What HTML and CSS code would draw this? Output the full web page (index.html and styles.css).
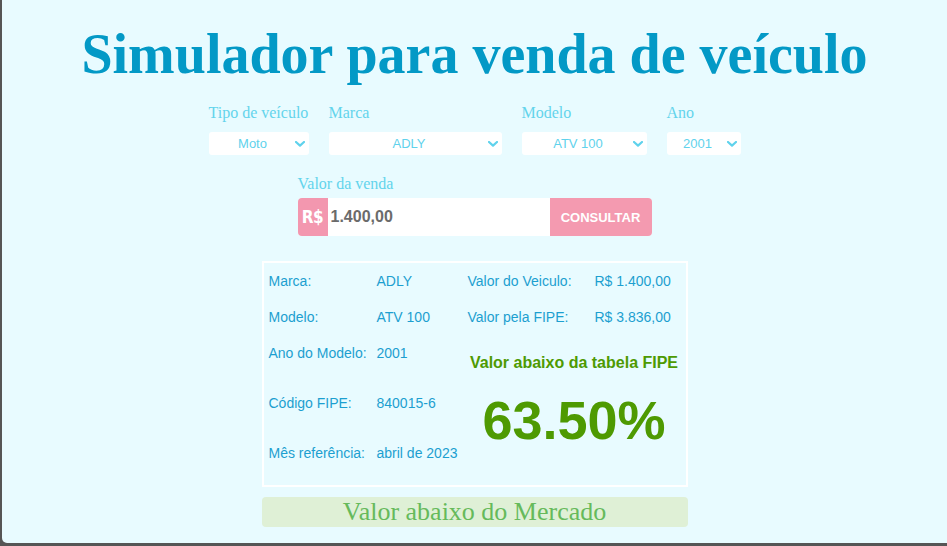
FILE: index.html
```html
<!DOCTYPE html>
<html lang="pt-BR">
<head>
<meta charset="utf-8">
<title>Simulador para venda de veículo</title>
<link rel="stylesheet" href="styles.css">
</head>
<body>
<main class="page">
  <h1 class="title">Simulador para venda de veículo</h1>

  <form class="filters">
    <div class="field field-tipo">
      <label class="field-label" for="tipo">Tipo de veículo</label>
      <div class="select-wrap">
        <select id="tipo" class="select"><option>Moto</option></select>
        <svg class="chevron" viewBox="0 0 10 6" aria-hidden="true"><path d="M1 1 L5 4.6 L9 1" fill="none" stroke="currentColor" stroke-width="2.2" stroke-linecap="round" stroke-linejoin="round"/></svg>
      </div>
    </div>
    <div class="field field-marca">
      <label class="field-label" for="marca">Marca</label>
      <div class="select-wrap">
        <select id="marca" class="select"><option>ADLY</option></select>
        <svg class="chevron" viewBox="0 0 10 6" aria-hidden="true"><path d="M1 1 L5 4.6 L9 1" fill="none" stroke="currentColor" stroke-width="2.2" stroke-linecap="round" stroke-linejoin="round"/></svg>
      </div>
    </div>
    <div class="field field-modelo">
      <label class="field-label" for="modelo">Modelo</label>
      <div class="select-wrap">
        <select id="modelo" class="select"><option>ATV 100</option></select>
        <svg class="chevron" viewBox="0 0 10 6" aria-hidden="true"><path d="M1 1 L5 4.6 L9 1" fill="none" stroke="currentColor" stroke-width="2.2" stroke-linecap="round" stroke-linejoin="round"/></svg>
      </div>
    </div>
    <div class="field field-ano">
      <label class="field-label" for="ano">Ano</label>
      <div class="select-wrap">
        <select id="ano" class="select"><option>2001</option></select>
        <svg class="chevron" viewBox="0 0 10 6" aria-hidden="true"><path d="M1 1 L5 4.6 L9 1" fill="none" stroke="currentColor" stroke-width="2.2" stroke-linecap="round" stroke-linejoin="round"/></svg>
      </div>
    </div>
  </form>

  <div class="sale">
    <label class="field-label" for="valor">Valor da venda</label>
    <div class="input-group">
      <span class="prefix">R$</span>
      <input id="valor" class="value-input" type="text" value="1.400,00">
      <button class="consult" type="button">CONSULTAR</button>
    </div>
  </div>

  <section class="result">
    <span class="k">Marca:</span><span class="v">ADLY</span>
    <span class="k">Valor do Veiculo:</span><span class="v">R$ 1.400,00</span>
    <span class="k">Modelo:</span><span class="v">ATV 100</span>
    <span class="k">Valor pela FIPE:</span><span class="v">R$ 3.836,00</span>
    <span class="k">Ano do Modelo:</span><span class="v">2001</span>
    <div class="fipe">
      <div class="fipe-title">Valor abaixo da tabela FIPE</div>
      <div class="fipe-pct">63.50%</div>
    </div>
    <span class="k">Código FIPE:</span><span class="v">840015-6</span>
    <span class="k">Mês referência:</span><span class="v">abril de 2023</span>
  </section>

  <div class="verdict">Valor abaixo do Mercado</div>
</main>
</body>
</html>
```

FILE: styles.css
```css
* { box-sizing: border-box; }

html, body {
  margin: 0;
  padding: 0;
  height: 100%;
}

body {
  background: #555555;
  overflow: hidden;
}

.page {
  margin-left: 2px;
  height: 543px;
  background: #e8fbff;
  border-bottom-left-radius: 5px;
  padding-top: 22px;
  display: flex;
  flex-direction: column;
  align-items: center;
}

.title {
  margin: 0;
  font-family: "Liberation Serif", "Times New Roman", serif;
  font-weight: bold;
  font-size: 56px;
  line-height: 64px;
  color: #0399c6;
  text-align: center;
}

.filters {
  margin: 18px 0 0;
  display: flex;
  gap: 20px;
}

.field { display: flex; flex-direction: column; }
.field-tipo { width: 100px; }
.field-marca { width: 173px; }
.field-modelo { width: 125px; }
.field-ano { width: 74px; }

.field-label {
  display: block;
  font-family: "Liberation Serif", "Times New Roman", serif;
  font-size: 16px;
  line-height: 18px;
  color: #63d4ec;
  margin-bottom: 10px;
  white-space: nowrap;
}

.select-wrap {
  position: relative;
  height: 23px;
  color: #5fd2ec;
}

.select {
  -webkit-appearance: none;
  appearance: none;
  width: 100%;
  height: 23px;
  border: none;
  border-radius: 3px;
  background: #ffffff;
  font-family: "Liberation Sans", Arial, sans-serif;
  font-size: 13px;
  color: #5fd2ec;
  padding: 0 12px 0 0;
  text-align: center;
  text-align-last: center;
  outline: none;
}

.chevron {
  position: absolute;
  right: 4px;
  top: 9px;
  width: 10px;
  height: 6px;
  pointer-events: none;
}

.sale {
  margin-top: 20px;
  width: 354px;
}

.sale .field-label { margin-bottom: 5px; }

.input-group {
  display: flex;
  height: 38px;
  border-radius: 4px;
  overflow: hidden;
  background: #ffffff;
}

.prefix {
  width: 30px;
  flex: none;
  background: #f397af;
  color: #ffffff;
  font-family: "Liberation Sans Narrow", "DejaVu Sans Condensed", "Liberation Sans", sans-serif;
  font-stretch: condensed;
  font-weight: 600;
  font-size: 17px;
  letter-spacing: -0.5px;
  display: flex;
  align-items: center;
  justify-content: center;
}

.value-input {
  flex: 1;
  min-width: 0;
  border: none;
  outline: none;
  background: #ffffff;
  padding: 0 3px;
  font-family: "Liberation Sans", Arial, sans-serif;
  font-weight: bold;
  font-size: 16px;
  color: #6b6b6b;
}

.consult {
  width: 102px;
  flex: none;
  border: none;
  background: #f49ab0;
  color: #ffffff;
  font-family: "Liberation Sans", Arial, sans-serif;
  font-weight: bold;
  font-size: 13px;
  padding: 0;
}

.result {
  margin-top: 25px;
  width: 426px;
  border: 2px solid #ffffff;
  padding: 8px 5px 22px;
  display: grid;
  grid-template-columns: 108px 91px 127px 1fr;
  grid-template-rows: 36px 36px 50px 50px 20px;
  font-family: "Liberation Sans", Arial, sans-serif;
  font-size: 14px;
  line-height: 20px;
  color: #1c9fd0;
}

.k, .v { white-space: nowrap; }

.fipe {
  grid-column: 3 / 5;
  grid-row: 3 / 6;
  text-align: center;
  color: #4e9a02;
  font-weight: bold;
  padding-top: 10px;
}

.fipe-title {
  font-size: 16px;
  line-height: 20px;
}

.fipe-pct {
  margin-top: 17px;
  font-size: 54px;
  line-height: 60px;
}

.verdict {
  margin-top: 10px;
  width: 426px;
  height: 30px;
  border-radius: 4px;
  background: #dff0d6;
  color: #66ba5b;
  font-family: "Liberation Serif", "Times New Roman", serif;
  font-size: 26px;
  line-height: 30px;
  text-align: center;
}
```
